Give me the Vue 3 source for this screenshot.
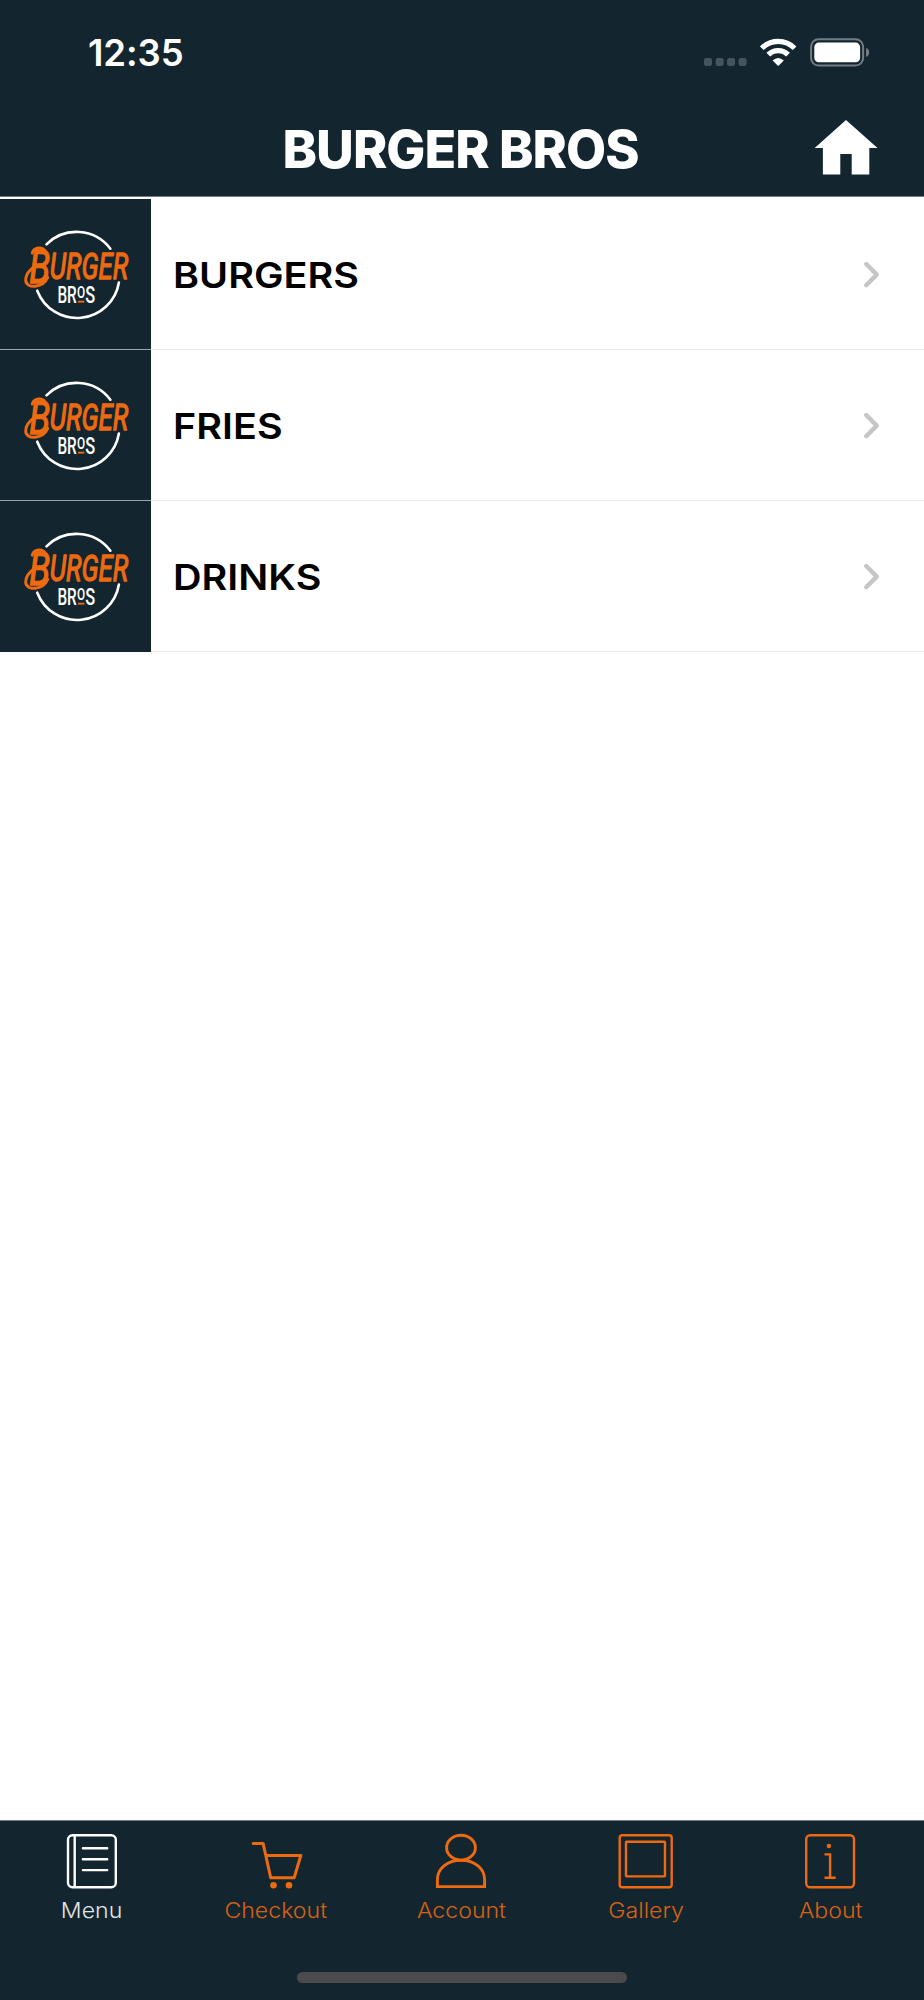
<script setup>
const rows = ['BURGERS', 'FRIES', 'DRINKS']
const tabs = [
  { label: 'Menu', icon: 'menu' },
  { label: 'Checkout', icon: 'cart' },
  { label: 'Account', icon: 'user' },
  { label: 'Gallery', icon: 'frame' },
  { label: 'About', icon: 'info' },
]
</script>

<template>
  <div class="screen">
    <header class="top">
      <div class="status">
        <span class="time">12:35</span>
        <svg class="signals" width="170" height="32" viewBox="0 0 170 32">
          <g fill="#46545d">
            <rect x="4" y="22" width="8" height="8" rx="2.2" />
            <rect x="15.7" y="22" width="8" height="8" rx="2.2" />
            <rect x="27" y="22" width="8" height="8" rx="2.2" />
            <rect x="38.6" y="22" width="8" height="8" rx="2.2" />
          </g>
          <g fill="none" stroke="#fff" stroke-width="5.2">
            <path d="M61.8 12.2A23 23 0 0 1 94.6 12.2" />
            <path d="M68.3 18.7A14 14 0 0 1 88.1 18.7" />
          </g>
          <path d="M72.6 24.6Q78.2 19.5 83.8 24.6L78.8 29.5Q78.2 30 77.6 29.5Z" fill="#fff" />
          <rect x="111.1" y="3.2" width="52" height="26.4" rx="7.5" fill="none" stroke="#727d83" stroke-width="2" />
          <rect x="114.3" y="6.6" width="45.8" height="19.6" rx="4.4" fill="#fff" />
          <path d="M166 12Q169.2 13 169.2 16.4T166 21Z" fill="#727d83" />
        </svg>
      </div>
      <div class="bar">
        <h1 class="title"><span>BURGER BROS</span></h1>
        <svg class="home" width="64" height="56" viewBox="0 0 64 56">
          <path d="M32 1L63.5 29H55.3V55.5H37.7V35H26.3V55.5H8.9V29H.7Z" fill="#fff" />
        </svg>
      </div>
    </header>

    <ul class="list">
      <li v-for="name in rows" :key="name" class="row">
        <svg class="logo" width="151" height="151" viewBox="0 0 151 151">
          <g fill="none" stroke="#fff" stroke-width="2.6" stroke-linecap="round">
            <path d="M46.3 45.6A42.8 42.8 0 0 1 110.6 50" />
            <path d="M119.2 84A42.8 42.8 0 0 1 37 92.3" />
          </g>
          <g class="brand" fill="#ee6a10" stroke="#ee6a10" stroke-width="1.4" stroke-linejoin="round">
            <text x="29" y="84.5" font-size="47" textLength="21" lengthAdjust="spacingAndGlyphs">B</text>
            <text x="49.6" y="81" font-size="37.5" textLength="79" lengthAdjust="spacingAndGlyphs">URGER</text>
          </g>
          <path
            d="M32 54.5C32.5 48 44.5 47.5 45.5 54M43 66.5C32 66 25.2 75 25.4 82C26 91 43 89.5 47.5 79"
            fill="none" stroke="#ee6a10" stroke-width="3" stroke-linecap="round"
          />
          <g class="bros" fill="#fff">
            <text x="57.3" y="104.2" font-size="23.3" textLength="19.5" lengthAdjust="spacingAndGlyphs">BR</text>
            <text x="77" y="100" font-size="17.5" textLength="8.2" lengthAdjust="spacingAndGlyphs">O</text>
            <text x="85.3" y="104.2" font-size="23.3" textLength="10" lengthAdjust="spacingAndGlyphs">S</text>
          </g>
          <rect x="78" y="102.4" width="6.4" height="1.9" fill="#ee6a10" />
        </svg>
        <span class="name"><span>{{ name }}</span></span>
        <svg class="chevron" width="20" height="30" viewBox="0 0 20 30">
          <path d="M5.2 4L15.7 14.6L5.2 25.2" fill="none" stroke="#c6c6c8" stroke-width="4.4" stroke-linecap="round" stroke-linejoin="round" />
        </svg>
      </li>
    </ul>

    <footer class="tabbar">
      <nav class="tabs">
        <a v-for="(tab, i) in tabs" :key="tab.label" class="tab" :class="{ active: i === 0 }">
          <svg width="60" height="56" viewBox="0 0 60 56" fill="none" stroke="currentColor" stroke-width="2.4">
            <template v-if="tab.icon === 'menu'">
              <rect x="6" y="2.2" width="47.8" height="52.1" rx="4.5" />
              <path d="M12.7 2V54.5" />
              <path d="M20.9 15.3H45.2M20.9 26.3H45.2M20.9 37.1H45.2" stroke-linecap="round" />
            </template>
            <template v-else-if="tab.icon === 'cart'">
              <path d="M6.2 10.4H16.1L23.7 44.7H47.2L53.8 22.5H19" stroke-width="3" stroke-linecap="round" stroke-linejoin="round" />
              <g fill="currentColor" stroke="none">
                <circle cx="26.5" cy="52.2" r="3.3" />
                <circle cx="42" cy="52.2" r="3.3" />
              </g>
            </template>
            <template v-else-if="tab.icon === 'user'">
              <g stroke-width="2.9">
                <ellipse cx="29" cy="14.7" rx="14.4" ry="12.4" />
                <path d="M5.4 53.6V46.5C5.4 36 15 27.2 29 27.2S52.6 36 52.6 46.5V53.6Z" />
              </g>
            </template>
            <template v-else-if="tab.icon === 'frame'">
              <rect x="2.7" y="2.2" width="52" height="52.1" rx="2.5" />
              <rect x="9" y="8.8" width="39" height="34.6" rx="0.6" />
            </template>
            <template v-else>
              <rect x="4.2" y="2.2" width="47.8" height="52.1" rx="4" />
              <circle cx="26.9" cy="13" r="2.2" fill="currentColor" stroke="none" />
              <path d="M22.5 21.4H28.1V44.7M22.5 44.7H33.7" />
            </template>
          </svg>
          <span class="label">{{ tab.label }}</span>
        </a>
      </nav>
      <div class="indicator"></div>
    </footer>
  </div>
</template>

<style>
body {
  margin: 0;
  background: #fff;
}
</style>

<style scoped>
.screen {
  display: flex;
  flex-direction: column;
  width: 924px;
  height: 2000px;
  background: #fff;
  font-family: Inter, "Liberation Sans", sans-serif;
}
.top {
  height: 196px;
  flex: none;
  background: #132630;
  border-bottom: 1px solid #6f7c84;
  color: #fff;
}
.status {
  display: flex;
  justify-content: space-between;
  align-items: center;
  height: 106px;
  padding: 0 54px 0 88px;
  box-sizing: border-box;
}
.time {
  font-size: 36.5px;
  font-weight: 600;
  letter-spacing: -0.1px;
}
.signals {
  margin-top: -2px;
}
.bar {
  display: grid;
  grid-template-columns: 107px 1fr 110px;
  height: 90px;
}
.title {
  grid-column: 2;
  margin: 0;
  text-align: center;
  font-size: 52px;
  line-height: 87px;
  font-weight: 800;
  letter-spacing: -1px;
  white-space: nowrap;
}
.home {
  margin: 13px 0 0;
}
.list {
  margin: 2px 0 0;
  padding: 0;
  list-style: none;
}
.row {
  display: flex;
  align-items: center;
  height: 151px;
  box-sizing: border-box;
  border-bottom: 1px solid #e9e9e9;
}
.logo {
  flex: none;
  height: 150px;
  background: #132630;
}
.row:not(:last-child) .logo {
  box-shadow: 0 1px #9ba4a9;
}
.row:last-child .logo {
  box-shadow: 0 1px #132630;
}
.brand {
  font-family: Roboto, sans-serif;
  font-weight: 400;
  font-style: italic;
}
.bros {
  font-family: Roboto, sans-serif;
  font-weight: 500;
}
.name {
  flex: 1;
  padding: 1px 0 0 22px;
  font-size: 36px;
  font-weight: 600;
  color: #000;
}
.name span {
  display: inline-block;
  transform-origin: left;
  transform: scaleX(1.098);
}
.chevron {
  margin: 1px 43.5px 0 0;
}
.tabbar {
  display: flex;
  flex-direction: column;
  align-items: center;
  justify-content: space-between;
  height: 180px;
  margin-top: auto;
  padding-bottom: 17px;
  box-sizing: border-box;
  background: #132630;
  box-shadow: inset 0 1px #6f7c84;
}
.tabs {
  display: grid;
  grid-template-columns: repeat(5, 1fr);
  width: 100%;
}
.tab {
  display: flex;
  flex-direction: column;
  align-items: center;
  padding-top: 13px;
  color: #ee6a10;
}
.active {
  color: #fff;
}
.label {
  margin-top: 7px;
  font-size: 21.5px;
  line-height: 28px;
  font-weight: 300;
  opacity: 0.88;
  transform: translateX(-1px) scaleX(1.075);
}
.indicator {
  width: 330px;
  height: 11px;
  border-radius: 6px;
  background: #4b4b4b;
}
</style>
